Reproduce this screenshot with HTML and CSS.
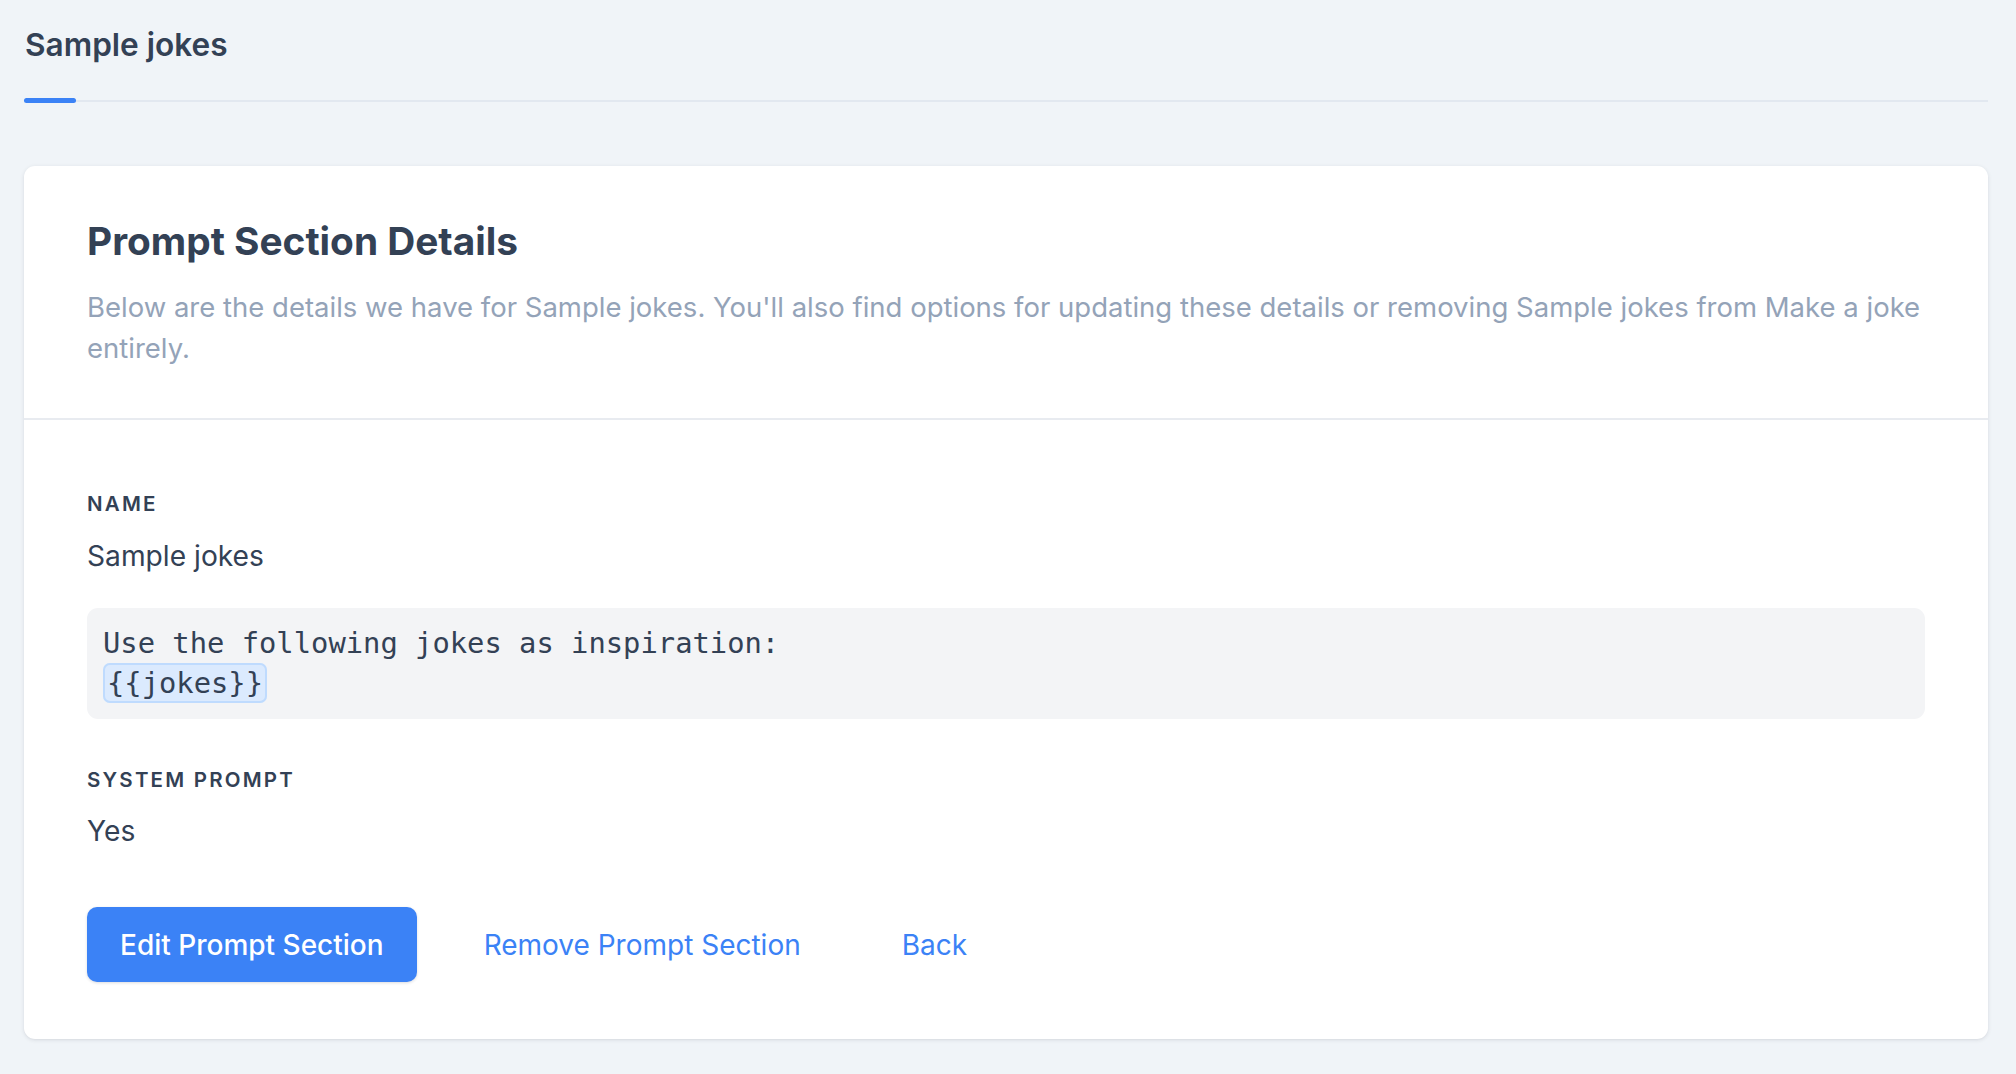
FILE: index.html
```html
<!DOCTYPE html>
<html lang="en">
<head>
<meta charset="utf-8">
<title>Sample jokes</title>
<link rel="stylesheet" href="styles.css">
</head>
<body>
<div class="page">
  <nav class="tabs">
    <div class="tab">
      <span class="tab-label">Sample jokes</span>
      <span class="tab-bar"></span>
    </div>
  </nav>

  <section class="card">
    <header class="card-head">
      <h1 class="card-title">Prompt Section Details</h1>
      <p class="card-desc">Below are the details we have for Sample jokes. You'll also find options for updating these details or removing Sample jokes from Make a joke entirely.</p>
    </header>
    <div class="card-body">
      <div class="field">
        <div class="field-label">Name</div>
        <div class="field-value">Sample jokes</div>
        <pre class="code">Use the following jokes as inspiration:
<span class="var">{{jokes}}</span></pre>
      </div>
      <div class="field">
        <div class="field-label">System Prompt</div>
        <div class="field-value">Yes</div>
      </div>
      <div class="actions">
        <a class="btn btn-primary" href="#">Edit Prompt Section</a>
        <a class="btn btn-link" href="#">Remove Prompt Section</a>
        <a class="btn btn-link" href="#">Back</a>
      </div>
    </div>
  </section>
</div>
</body>
</html>
```

FILE: styles.css
```css
* { box-sizing: border-box; }

html, body {
  margin: 0;
  padding: 0;
  background: #f0f4f8;
  font-family: "Inter", "Liberation Sans", sans-serif;
  color: #334155;
}

.page {
  padding: 25px 28px 40px 24px;
}

.tabs {
  display: flex;
  border-bottom: 2px solid #e2e8f0;
}

.tab {
  display: flex;
  flex-direction: column;
  align-items: flex-start;
}

.tab-label {
  font-size: 31.6px;
  line-height: 40px;
  font-weight: 600;
  color: #334155;
  padding-left: 1px;
}

.tab-bar {
  display: block;
  width: 52px;
  height: 5px;
  margin-top: 33px;
  margin-bottom: -3px;
  background: #3b82f6;
  border-radius: 3px;
}

.card {
  margin-top: 64px;
  background: #ffffff;
  border-radius: 11px;
  box-shadow: 0 1px 4px 0 rgba(15, 23, 42, 0.10), 0 1px 2px -1px rgba(15, 23, 42, 0.10);
}

.card-head {
  padding: 52px 48px 49px 63px;
  border-bottom: 2px solid #e8ebf0;
}

.card-title {
  margin: 0;
  font-size: 38.8px;
  line-height: 46px;
  font-weight: 700;
  color: #334155;
}

.card-desc {
  margin: 23px 0 0;
  font-size: 27.5px;
  line-height: 41px;
  color: #94a3b8;
}

.card-body {
  padding: 71px 63px 57px 63px;
}

.field + .field {
  margin-top: 48px;
}

.field-label {
  font-size: 20.5px;
  line-height: 26px;
  font-weight: 600;
  letter-spacing: 2.2px;
  text-transform: uppercase;
  color: #334155;
}

.field-value {
  margin-top: 18.5px;
  font-size: 28.2px;
  line-height: 40px;
  color: #334155;
}

.code {
  margin: 32px 0 0;
  padding: 15.5px 16px;
  background: #f3f4f6;
  border-radius: 11px;
  font-family: "DejaVu Sans Mono", "Liberation Mono", monospace;
  font-size: 28.8px;
  line-height: 40px;
  color: #334155;
  white-space: pre-wrap;
}

.var {
  background: #dbeafe;
  border: 2px solid #bfdbfe;
  border-radius: 7px;
  padding: 1px 2px;
}

.actions {
  display: flex;
  align-items: center;
  gap: 33px;
  margin-top: 56px;
}

.btn {
  display: inline-block;
  padding: 19.5px 34px;
  font-size: 28px;
  line-height: 36px;
  font-weight: 500;
  text-decoration: none;
  border-radius: 10px;
}

.btn-primary {
  padding-left: 33px;
  padding-right: 33px;
  background: #3b82f6;
  color: #ffffff;
  box-shadow: 0 1px 3px rgba(15, 23, 42, 0.15);
}

.btn-link {
  color: #3b82f6;
  font-weight: 400;
}
```
